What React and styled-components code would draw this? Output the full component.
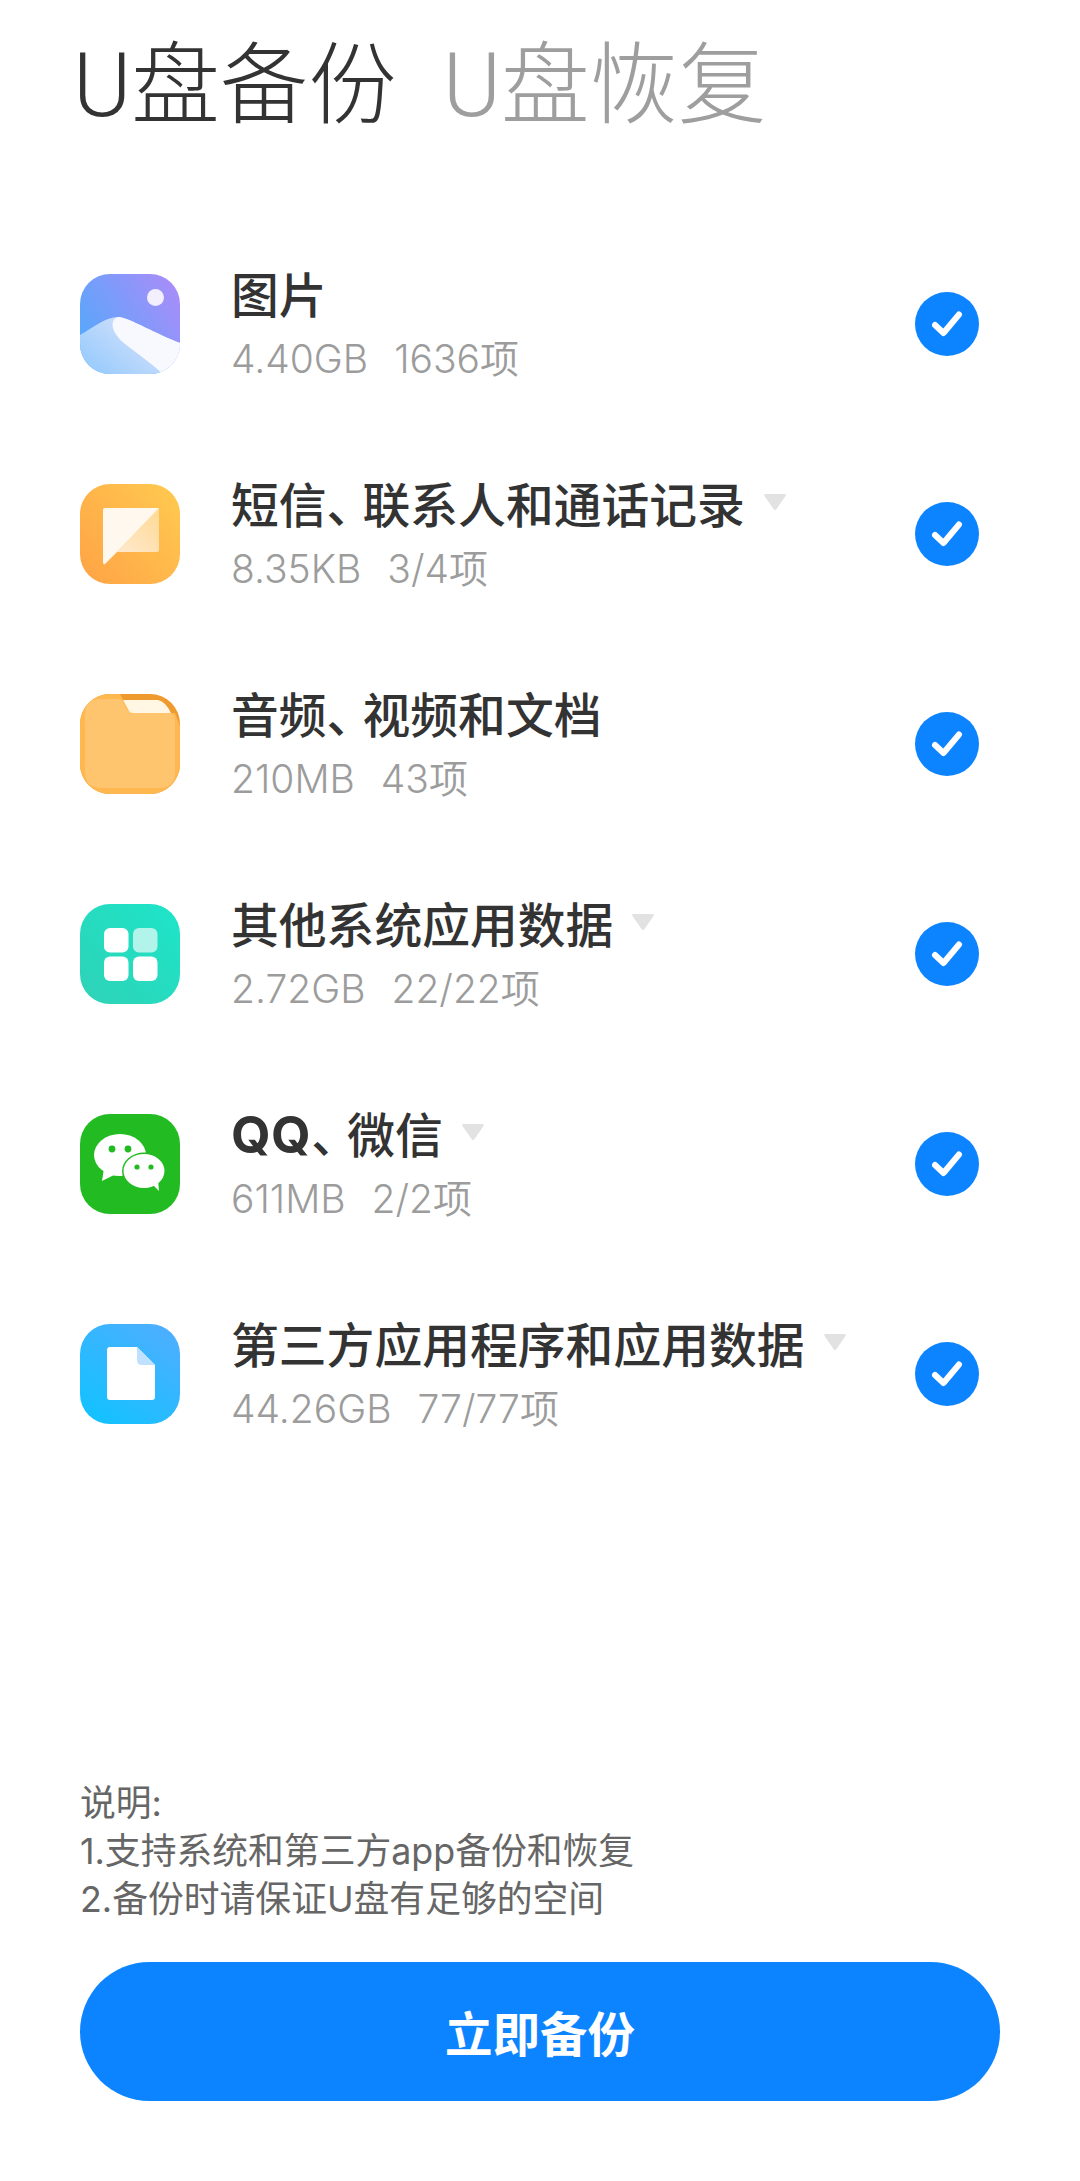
import React from "react";
import styled, { createGlobalStyle } from "styled-components";

const Global = createGlobalStyle`
  html, body { margin: 0; padding: 0; background: #fff; }
  * { box-sizing: border-box; }
`;

const FONT = `"Inter", "Noto Sans CJK SC", sans-serif`;

const Page = styled.div`
  width: 1080px;
  height: 2181px;
  display: flex;
  flex-direction: column;
  padding: 26px 80px 80px;
  font-family: ${FONT};
  overflow: hidden;
`;
const Tabs = styled.div`
  display: flex;
  gap: 46px;
  height: 120px;
  margin-left: -7px;
  margin-bottom: 73px;
  font-family: "Roboto", "Noto Sans CJK SC", sans-serif;
`;
const Tab = styled.div`
  font-size: 88.5px;
  line-height: 120px;
  font-weight: 300;
  color: ${(p) => (p.$active ? "#333333" : "#9e9e9e")};
`;
const List = styled.div`
  display: flex;
  flex-direction: column;
`;
const Row = styled.div`
  display: flex;
  align-items: center;
  height: 210px;
`;
const IconBox = styled.div`
  width: 100px;
  height: 100px;
  flex: none;
  border-radius: 30px;
  overflow: hidden;
  svg { display: block; width: 100px; height: 100px; }
`;
const Text = styled.div`
  flex: 1;
  min-width: 0;
  display: flex;
  flex-direction: column;
  gap: 11px;
  margin-left: 51px;
`;
const TitleLine = styled.div`
  display: flex;
  align-items: center;
  height: 58px;
`;
const Title = styled.div`
  font-size: 47.8px;
  line-height: 60px;
  font-weight: 500;
  color: #333333;
  white-space: nowrap;
`;
const Latin = styled.span`
  font-size: 51px;
  font-weight: 700;
  letter-spacing: 0.5px;
`;
const Pause = styled.span`
  font-feature-settings: "halt";
  margin-right: 12px;
`;
const Caret = styled.svg`
  width: 24px;
  height: 18px;
  margin-left: 18px;
  margin-top: -8px;
  flex: none;
`;
const Sub = styled.div`
  display: flex;
  gap: 26px;
  font-size: 39px;
  line-height: 46px;
  font-weight: 350;
  color: #9c9c9c;
  white-space: nowrap;
`;
const Check = styled.svg`
  width: 64px;
  height: 64px;
  flex: none;
  margin-right: 21px;
`;
const Footer = styled.div`
  margin-top: auto;
  display: flex;
  flex-direction: column;
  gap: 39px;
`;
const Note = styled.div`
  font-size: 35.8px;
  line-height: 48px;
  color: #666666;
`;
const Button = styled.button`
  height: 139px;
  width: 920px;
  border: 0;
  border-radius: 70px;
  background: #0d84ff;
  color: #fff;
  font-family: ${FONT};
  font-size: 47.5px;
  font-weight: 600;
`;

const Gallery = () => (
  <svg viewBox="0 0 100 100">
    <defs>
      <linearGradient id="gBg" x1="0" y1="0.7" x2="1" y2="0.1">
        <stop offset="0" stopColor="#55a8fb" />
        <stop offset="1" stopColor="#ab8cf9" />
      </linearGradient>
      <linearGradient id="gHill" x1="0" y1="1" x2="1" y2="0.3">
        <stop offset="0" stopColor="#8fc8fc" />
        <stop offset="1" stopColor="#e1e6fc" />
      </linearGradient>
    </defs>
    <rect width="100" height="100" fill="url(#gBg)" />
    <circle cx="75.5" cy="23.5" r="8.5" fill="#f3effe" />
    <path d="M0 61 C14 53 26 43 38 43 C48 43 80 62 100 69 V100 H0Z" fill="url(#gHill)" />
    <path d="M38 43 C48 43 80 62 100 69 V90 Q96 98 83 100 C72 90 58 80 45 70 C35 62 31 53 33 48 Q34 44 38 43Z" fill="#f7f9ff" />
  </svg>
);

const Messages = () => (
  <svg viewBox="0 0 100 100">
    <defs>
      <linearGradient id="mBg" x1="0" y1="0.8" x2="1" y2="0">
        <stop offset="0" stopColor="#ffa646" />
        <stop offset="1" stopColor="#ffcb50" />
      </linearGradient>
      <linearGradient id="mTri" x1="0.2" y1="1" x2="1" y2="0">
        <stop offset="0" stopColor="#ffeed8" stopOpacity="0.9" />
        <stop offset="1" stopColor="#ffdfa6" stopOpacity="0.8" />
      </linearGradient>
    </defs>
    <rect width="100" height="100" fill="url(#mBg)" />
    <path d="M79 24 V66 Q79 68 77 68 H37Z" fill="url(#mTri)" />
    <path d="M25 24 H79 L37 68 L25 80 Q23 81 23 78 V26 Q23 24 25 24Z" fill="#fff8ee" />
  </svg>
);

const Folder = () => (
  <svg viewBox="0 0 100 100">
    <rect width="100" height="100" fill="#ef9a2e" />
    <path d="M40 0 H0 V100 H100 V32 L95 19 H50Z" fill="#ffb84f" />
    <path d="M43 6 H78 Q86 8 91 19 H50Z" fill="#fff6e4" />
    <path d="M5 20 Q5 5 20 5 H38 Q42 5 44 10 Q47 19 54 19 H88 Q95 19 95 27 V78 Q95 94 78 94 H22 Q5 94 5 78Z" fill="#ffc56e" />
  </svg>
);

const Apps = () => (
  <svg viewBox="0 0 100 100">
    <defs>
      <linearGradient id="aBg" x1="0" y1="1" x2="1" y2="0">
        <stop offset="0" stopColor="#2fd2b6" />
        <stop offset="1" stopColor="#1de5c9" />
      </linearGradient>
    </defs>
    <rect width="100" height="100" fill="url(#aBg)" />
    <rect x="24" y="24" width="24.5" height="24.5" rx="6" fill="#fff" />
    <rect x="53" y="24" width="24.5" height="24.5" rx="6" fill="#fff" opacity="0.65" />
    <rect x="24" y="52.5" width="24.5" height="24.5" rx="6" fill="#fff" />
    <rect x="53" y="52.5" width="24.5" height="24.5" rx="6" fill="#fff" />
  </svg>
);

const Wechat = () => (
  <svg viewBox="0 0 100 100">
    <rect width="100" height="100" fill="#22bb22" />
    <ellipse cx="40" cy="41" rx="26" ry="21" fill="#fff" />
    <path d="M24 54 L22 67 L36 60Z" fill="#fff" />
    <circle cx="32" cy="35" r="3.4" fill="#22bb22" />
    <circle cx="48" cy="35" r="3.4" fill="#22bb22" />
    <ellipse cx="64" cy="57" rx="22" ry="18.5" fill="#22bb22" />
    <ellipse cx="64" cy="57" rx="20.5" ry="17" fill="#fff" />
    <path d="M72 70 L79 77 L78 66Z" fill="#fff" />
    <circle cx="57" cy="53" r="2.6" fill="#22bb22" />
    <circle cx="71" cy="53" r="2.6" fill="#22bb22" />
  </svg>
);

const FileIcon = () => (
  <svg viewBox="0 0 100 100">
    <defs>
      <linearGradient id="fBg" x1="0.15" y1="1" x2="0.85" y2="0">
        <stop offset="0" stopColor="#12c2ff" />
        <stop offset="1" stopColor="#4eaeff" />
      </linearGradient>
    </defs>
    <rect width="100" height="100" fill="url(#fBg)" />
    <path d="M30 23 H57 L75 41 V73 Q75 76 72 76 H30 Q27 76 27 73 V26 Q27 23 30 23Z" fill="#fff" />
    <path d="M57 23 L75 41 H62 Q57 41 57 36Z" fill="#bfe0fe" />
  </svg>
);

const CheckMark = () => (
  <Check viewBox="0 0 64 64">
    <circle cx="32" cy="32" r="32" fill="#0d84ff" />
    <path d="M20 33 L28.5 41 L44 22.5" fill="none" stroke="#fff" strokeWidth="6" strokeLinecap="round" strokeLinejoin="round" />
  </Check>
);

const CaretDown = () => (
  <Caret viewBox="0 0 24 18">
    <path d="M2.5 1 H21.5 Q23.5 1 22.5 3 L13.5 16 Q12 18 10.5 16 L1.5 3 Q0.5 1 2.5 1Z" fill="#e2e2e2" />
  </Caret>
);

const rows = [
  { icon: Gallery, title: <>图片</>, size: "4.40GB", count: "1636项" },
  { icon: Messages, title: <>短信<Pause>、</Pause>联系人和通话记录</>, size: "8.35KB", count: "3/4项", caret: true },
  { icon: Folder, title: <>音频<Pause>、</Pause>视频和文档</>, size: "210MB", count: "43项" },
  { icon: Apps, title: <>其他系统应用数据</>, size: "2.72GB", count: "22/22项", caret: true },
  { icon: Wechat, title: <><Latin>QQ</Latin><Pause>、</Pause>微信</>, size: "611MB", count: "2/2项", caret: true },
  { icon: FileIcon, title: <>第三方应用程序和应用数据</>, size: "44.26GB", count: "77/77项", caret: true },
];

export default function App() {
  return (
    <Page>
      <Global />
      <Tabs>
        <Tab $active>U盘备份</Tab>
        <Tab>U盘恢复</Tab>
      </Tabs>
      <List>
        {rows.map((r) => {
          const Icon = r.icon;
          return (
            <Row key={r.size}>
              <IconBox><Icon /></IconBox>
              <Text>
                <TitleLine>
                  <Title>{r.title}</Title>
                  {r.caret && <CaretDown />}
                </TitleLine>
                <Sub><span>{r.size}</span><span>{r.count}</span></Sub>
              </Text>
              <CheckMark />
            </Row>
          );
        })}
      </List>
      <Footer>
        <Note>
          说明:<br />
          1.支持系统和第三方app备份和恢复<br />
          2.备份时请保证U盘有足够的空间
        </Note>
        <Button>立即备份</Button>
      </Footer>
    </Page>
  );
}
